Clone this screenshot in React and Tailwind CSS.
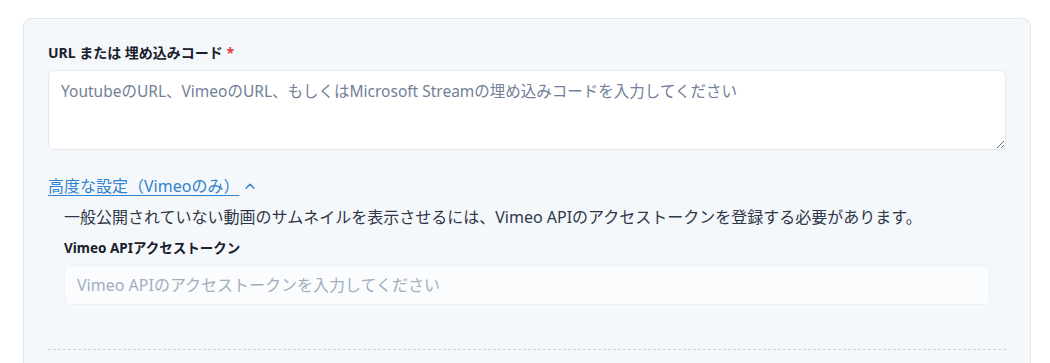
import React from 'react';

const ChevronUp = () => (
  <svg width="14" height="14" viewBox="0 0 16 16" fill="none" className="ml-[4px]">
    <path d="M3.5 10.5 L8 6 L12.5 10.5" stroke="#3182ce" strokeWidth="1.6" strokeLinecap="round" strokeLinejoin="round" />
  </svg>
);

const App = () => {
  return (
    <div
      className="min-h-screen bg-white pt-[18px] pl-[23px] pr-[19px] overflow-hidden"
      style={{ fontFamily: '"Noto Sans", "Noto Sans CJK JP", sans-serif' }}
    >
      <div className="rounded-lg border border-[#e2e8f0] bg-[#f5f8fb] px-6 pt-6 pb-10">
        <label className="block text-[14px] font-bold leading-5 text-[#1a202c]">
          URL または 埋め込みコード <span className="text-[#e53e3e]">*</span>
        </label>
        <textarea
          className="mt-[7px] block h-[80px] w-full rounded-md border border-[#e2e8f0] bg-white px-3 py-2 text-[15.5px] leading-6 text-[#1a202c] placeholder:text-[#718096] outline-none"
          placeholder="YoutubeのURL、VimeoのURL、もしくはMicrosoft Streamの埋め込みコードを入力してください"
        />

        <div className="mt-6 flex items-center">
          <a className="text-[16px] leading-6 text-[#3182ce] underline underline-offset-[3px] decoration-[1px] cursor-pointer">
            高度な設定（Vimeoのみ）
          </a>
          <ChevronUp />
        </div>

        <div className="px-4">
          <p className="mt-[7px] text-[16px] leading-6 text-[#2d3748]">
            一般公開されていない動画のサムネイルを表示させるには、Vimeo APIのアクセストークンを登録する必要があります。
          </p>
          <label className="mt-[9px] block text-[13.5px] font-bold leading-5 text-[#1a202c]">
            Vimeo APIアクセストークン
          </label>
          <input
            className="mt-[7px] block h-10 w-full rounded-md border border-[#edf1f6] bg-[#fbfcfe] px-3 text-[16px] text-[#1a202c] placeholder:text-[#a0aec0] outline-none"
            placeholder="Vimeo APIのアクセストークンを入力してください"
          />
        </div>

        <div className="mt-[44px] border-t border-dashed border-[#cbd5e0]" />
      </div>
    </div>
  );
};

export default App;
